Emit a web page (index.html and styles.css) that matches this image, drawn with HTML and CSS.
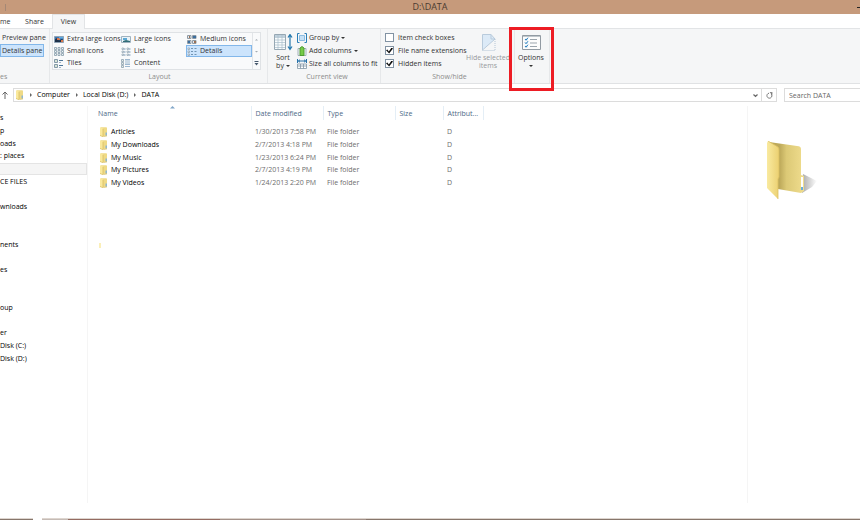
FILE: index.html
```html
<!DOCTYPE html>
<html lang="en">
<head>
<meta charset="utf-8">
<title>D:\DATA</title>
<link rel="stylesheet" href="styles.css">
</head>
<body>
<svg class="defs" aria-hidden="true">
  <defs>
    <linearGradient id="leaf" x1="0" y1="0" x2="1" y2="0"><stop offset="0" stop-color="#f9eaa0"/><stop offset="1" stop-color="#ebd071"/></linearGradient>
    <linearGradient id="back" x1="0" y1="0" x2="1" y2="0"><stop offset=".3" stop-color="#bda95a"/><stop offset=".5" stop-color="#dcc976"/><stop offset="1" stop-color="#f0dd8e"/></linearGradient>
    <linearGradient id="shade" x1="0" y1="0" x2="1" y2="0"><stop offset="0" stop-color="#aaa"/><stop offset="1" stop-color="#fff"/></linearGradient>
    <symbol id="folder" viewBox="0 0 9 10">
      <path d="M1 1l1-.7h5.500l.5.7v8H1z" fill="#efda86"/>
      <path d="M1 .5l3 1V10L1 8.500z" fill="#fae99c"/>
      <path d="M4 2v7.500" stroke="#cfb355" stroke-width=".6"/>
      <path d="M6.500 5.500h1.500v3h-1.500z" fill="#8fb6cf"/>
      <path d="M1 8.500l3 1.300 4-.9" stroke="#d3b856" stroke-width=".6" fill="none"/>
    </symbol>
    <symbol id="bullets" viewBox="0 0 10 9">
      <path d="M1 1h1.500v1.500H1zM1 4h1.500v1.500H1zM1 7h1.500v1.500H1z" fill="#fff" stroke="#8b9eae" stroke-width=".7"/>
      <path d="M4 1.500h2M7.500 1.500h2M4 4.500h2M7.500 4.500h2M4 7.500h2M7.500 7.500h2" stroke="#7294b3"/>
    </symbol>
  </defs>
</svg>

<header class="titlebar"><span class="grip"></span><h1>D:\DATA</h1><span class="minimize"></span></header>

<nav class="tabs" aria-label="Ribbon tabs">
  <button class="tab tab-home">me</button>
  <button class="tab tab-share">Share</button>
  <button class="tab tab-view">View</button>
</nav>

<section class="ribbon">
  <div class="group panes">
    <div class="stack">
      <button>Preview pane</button>
      <button class="selected">Details pane</button>
    </div>
    <h2>es</h2>
  </div>

  <div class="group layout">
    <div class="gallery">
      <div class="options-grid">
        <button><svg viewBox="0 0 10 9"><path d="M.5 1.500h9v6h-9z" fill="#3f75ae" stroke="#8fa3b5"/><path d="M1 7V4.500l2-1.500 2 2.500L8 4l1 1v2z" fill="#1d3048"/><path d="M3 3h3v2H3zM7 5h2v2H7z" fill="#d9784d"/><path d="M5 2h4v1.500H5z" fill="#5cabe2"/></svg>Extra large icons</button>
        <button><svg viewBox="0 0 10 9"><path d="M.5 1.500h9v6h-9z" fill="#e9f3f8" stroke="#9fb2bf"/><path d="M2 3h4v2H2z" fill="#5ca8d4"/><path d="M2 6l3-1 4 1v1H2z" fill="#306d78"/></svg>Large icons</button>
        <button><svg viewBox="0 0 10 9"><path d="M.5 .5h3.500v3H.5zM5.500 .5h3.500v3H5.500zM.5 5.500h3.500v3H.5zM5.500 5.500h3.500v3H5.500z" fill="#e6eaed" stroke="#8e9aa5"/><path d="M6 1h3v2H6zM1 6h2v2H1z" fill="#3c6e9d"/><path d="M2 1h1v2H2zM7 6h2v2H7z" fill="#9a7157"/></svg>Medium icons</button>
        <button><svg viewBox="0 0 10 9"><path d="M.5 .5h2v2h-2zM4 .5h2v2H4zM7.500 .5h2v2h-2zM.5 3.500h2v2h-2zM4 3.500h2v2H4zM7.500 3.500h2v2h-2zM.5 6.500h2v2h-2zM4 6.500h2v2H4zM7.500 6.500h2v2h-2z" fill="#eff5f6" stroke="#8499a8" stroke-width=".8"/></svg>Small icons</button>
        <button><svg viewBox="0 0 10 9"><path d="M1 1h1.500v1.500H1zM1 4h1.500v1.500H1zM1 7h1.500v1.500H1zM6 1h1.500v1.500H6zM6 4h1.500v1.500H6zM6 7h1.500v1.500H6z" fill="#fff" stroke="#8b9eae" stroke-width=".7"/><path d="M3 2h1.500M3 5h1.500M3 8h1.500M8 2h1.500M8 5h1.500M8 8h1.500" stroke="#7294b3"/></svg>List</button>
        <button class="selected"><svg><use href="#bullets"/></svg>Details</button>
        <button><svg viewBox="0 0 10 9"><path d="M.5 .5h3v3h-3zM.5 5.500h3v3h-3z" fill="#d8e5d6" stroke="#8499a8"/><path d="M5 1.500h4M5 6.500h4" stroke="#4e7698"/><path d="M5 3.500h2M5 8.500h2" stroke="#a1b4c4"/></svg>Tiles</button>
        <button><svg viewBox="0 0 10 9"><path d="M.5 .5h2v2h-2zM.5 3.500h2v2h-2zM.5 6.500h2v2h-2z" fill="#e6efe7" stroke="#8b9eae" stroke-width=".8"/><path d="M4 .5h5M4 2h5M4 4h5M4 5.500h5M4 7.500h5" stroke="#86a7c5" stroke-width=".8"/></svg>Content</button>
      </div>
      <div class="scroller">
        <button aria-label="Scroll up"><svg viewBox="0 0 5 5"><path d="M1 3.500L2.500 2 4 3.500z" fill="#a4abb2"/></svg></button>
        <button aria-label="Scroll down"><svg viewBox="0 0 5 5"><path d="M1 2h3L2.500 3.500z" fill="#a4abb2"/></svg></button>
        <button aria-label="More layouts"><svg viewBox="0 0 5 5"><path d="M.5 .5h4" stroke="#46586c"/><path d="M.5 2h4L2.500 4.500z" fill="#46586c"/></svg></button>
      </div>
    </div>
    <h2>Layout</h2>
  </div>

  <div class="group current">
    <div class="tools">
      <button class="large">
        <svg viewBox="0 0 19 17"><path d="M.5 .5h11v15H.5z" fill="#f9fcfd" stroke="#96a7b3"/><path d="M1 1h10v2H1z" fill="#bfd0dc"/><path d="M1 3.500h10M1 6h10M1 8.500h10M1 11h10M1 13.500h10M4 1v14M8 1v14" stroke="#a9bdca" stroke-width=".7"/><path d="M16 1v14M14 3.500l2-3 2 3M14 12.500l2 3 2-3" stroke="#2478ae" stroke-width="1.200" fill="none"/></svg>
        <span>Sort<br>by<i class="caret"></i></span>
      </button>
      <div class="stack">
        <button><svg viewBox="0 0 10 10"><path d="M2.500 .5h-2v9h2M7.500 .5h2v9h-2" fill="none" stroke="#2b7eb6"/><path d="M2.500 2.500h5v5h-5z" fill="#c6e1f6" stroke="#8cbce2"/></svg>Group by<i class="caret"></i></button>
        <button><svg viewBox="0 0 10 10"><path d="M1 2.500h8v7H1z" fill="#f6f8f9" stroke="#a2b0b9"/><path d="M3 2L5 .5 7 2v7.500H3z" fill="#75cb46" stroke="#4d9b33"/></svg>Add columns<i class="caret"></i></button>
        <button><svg viewBox="0 0 10 10"><path d="M.5 0v4M9.500 0v4M1 2h8M3 .7L1.500 2 3 3.300M7 .7L8.500 2 7 3.300" fill="none" stroke="#2873aa"/><path d="M.5 5h9v4.500h-9zM.5 7h9M3.500 5v4.500M6.500 5v4.500" fill="#fff" stroke="#8296a5" stroke-width=".8"/></svg>Size all columns to fit</button>
      </div>
    </div>
    <h2>Current view</h2>
  </div>

  <div class="group showhide">
    <div class="tools">
      <div class="stack">
        <label><input type="checkbox">Item check boxes</label>
        <label><input type="checkbox" checked>File name extensions</label>
        <label><input type="checkbox" checked>Hidden items</label>
      </div>
      <button class="large" disabled>
        <svg viewBox="0 0 15 17"><path d="M1 1h9l4 4L1 16z" fill="#dceaf7"/><path d="M1.500 16V.5H10L14 5" fill="none" stroke="#b9cbdc"/><path d="M10 .5V5h4M14 5L1.500 16" fill="none" stroke="#b9cbdc"/><path d="M14 5v11.500H1" fill="none" stroke="#b5c6d6" stroke-dasharray="1 1"/></svg>
        <span>Hide selected<br>items</span>
      </button>
    </div>
    <h2>Show/hide</h2>
  </div>

  <div class="group folder-options">
    <button class="large">
      <svg viewBox="0 0 19 15"><path d="M.5 .5h18v14H.5z" fill="#fcfcfc" stroke="#929ba3"/><path d="M1 1.500h17" stroke="#bfc6cb"/><path d="M3 3.500h3v2H3zM3 7h3v2H3zM3 10.500h3v2H3z" fill="#d9eaf6"/><path d="M3 4l1 1.200 2-2.500M3 7.500l1 1.200 2-2.500M3 11l1 1.200 2-2.500" fill="none" stroke="#287ebd"/><path d="M8 4.500h7M8 8h7M8 11.500h7" stroke="#9ca5ad"/></svg>
      <span>Options<br><i class="caret"></i></span>
    </button>
    <span class="highlight"></span>
  </div>
</section>

<section class="location">
  <button class="up" aria-label="Up"><svg viewBox="0 0 6 8"><path d="M3 8V1M.5 3.500L3 1l2.500 2.500" fill="none" stroke="#666"/></svg></button>
  <div class="address">
    <svg class="folder"><use href="#folder"/></svg>
    <ol>
      <li><a href="#">Computer</a></li>
      <li><a href="#">Local Disk (D:)</a></li>
      <li><a href="#">DATA</a></li>
    </ol>
    <button class="history" aria-label="Recent locations"><svg viewBox="0 0 5 5"><path d="M.5 1.500l2 2 2-2" fill="none" stroke="#666" stroke-width="1.200"/></svg></button>
    <button class="refresh" aria-label="Refresh"><svg viewBox="0 0 7 7"><path d="M5.300 2A2.500 2.500 0 1 1 3 1.200" fill="none" stroke="#777"/><path d="M3.500 0l3 .3-.3 2.700z" fill="#777"/></svg></button>
  </div>
  <input class="search" type="search" placeholder="Search DATA" aria-label="Search DATA">
</section>

<main>
  <nav class="tree" aria-label="Folders">
    <ul>
      <li>s</li><li>p</li><li>oads</li><li>: places</li><li class="current-place"></li><li>CE FILES</li><li></li><li>wnloads</li><li></li><li></li>
      <li>nents</li><li></li><li>es</li><li></li><li></li><li>oup</li><li></li><li>er</li><li>Disk (C:)</li><li>Disk (D:)</li>
    </ul>
  </nav>
  <section class="files">
    <table>
      <thead><tr><th class="name">Name<svg class="sorted" viewBox="0 0 5 3"><path d="M0 2.500L2.500 0 5 2.500z" fill="#80a6c8"/></svg></th><th class="date">Date modified</th><th class="type">Type</th><th class="size">Size</th><th class="attr">Attribut...</th></tr></thead>
      <tbody>
        <tr><td><svg class="folder"><use href="#folder"/></svg>Articles</td><td>1/30/2013 7:58 PM</td><td>File folder</td><td></td><td>D</td></tr>
        <tr><td><svg class="folder"><use href="#folder"/></svg>My Downloads</td><td>2/7/2013 4:18 PM</td><td>File folder</td><td></td><td>D</td></tr>
        <tr><td><svg class="folder"><use href="#folder"/></svg>My Music</td><td>1/23/2013 6:24 PM</td><td>File folder</td><td></td><td>D</td></tr>
        <tr><td><svg class="folder"><use href="#folder"/></svg>My Pictures</td><td>2/7/2013 4:19 PM</td><td>File folder</td><td></td><td>D</td></tr>
        <tr><td><svg class="folder"><use href="#folder"/></svg>My Videos</td><td>1/24/2013 2:20 PM</td><td>File folder</td><td></td><td>D</td></tr>
      </tbody>
    </table>
    <span class="speck"></span>
  </section>
  <aside class="details">
    <svg viewBox="0 0 54 60"><path d="M36 33l14 7-5 6-10 6z" fill="url(#shade)"/><path d="M2 1l28 4q4 0 4 3v26l3 1v15l-3 2-23-4z" fill="url(#back)"/><path d="M34 36h2v13h-2z" fill="#fff"/><path d="M34 46h2v3h-2z" fill="#68aee0"/><path d="M1 0l10 6q1 1 1 3v27l-1 2v20L0 47V2z" fill="url(#leaf)"/><path d="M1 0l10 6q1 1 1 3v27l-1 2v20" fill="none" stroke="#dcc062" stroke-width=".8"/></svg>
  </aside>
</main>
<footer class="taskbar"><span class="seg start"></span><span class="seg pale"></span><span class="seg red"></span><span class="seg mauve"></span><span class="seg rest"></span></footer>
</body>
</html>
```
FILE: styles.css
```css
* { box-sizing: border-box; }
body {
  margin: 0;
  min-height: 100vh;
  display: flex;
  flex-direction: column;
  overflow: hidden;
  background: #fff;
  color: #000;
  font: 7px/8px "Open Sans", "Noto Sans", sans-serif;
}
button, input { font: inherit; color: inherit; }
button { margin: 0; padding: 0; border: 0; background: none; white-space: nowrap; }
svg { display: block; flex: none; }
h1, h2, ul, ol { margin: 0; padding: 0; font-weight: 400; list-style: none; }
.defs { position: absolute; width: 0; height: 0; }

.titlebar { display: grid; grid-template-columns: 1fr auto 1fr; align-items: center; height: 14px; background: #c69a7b; color: #4b3a30; }
.titlebar h1 { font-size: 9px; line-height: 12px; }
.grip { width: 1px; height: 7px; margin-left: 5px; background: #a58875; }
.minimize { width: 3px; height: 1px; justify-self: end; background: #222; }

.tabs { display: flex; height: 15px; border-bottom: 1px solid #e2e4e6; color: #333; }
.tab { height: 15px; }
.tab-home { width: 17px; text-align: left; }
.tab-share { width: 35px; }
.tab-view { width: 33px; background: #f5f6f7; border: 1px solid #e2e4e6; border-bottom: 0; }

.ribbon { display: flex; height: 55px; background: #f5f6f7; border-bottom: 1px solid #e0e2e4; color: #333; }
.group { position: relative; display: flex; flex-direction: column; justify-content: space-between; padding: 2px 0 1px; border-right: 1px solid #e6e8ea; }
.group h2 { color: #8c8c8c; font-size: 7px; line-height: 10px; text-align: center; }
.group.panes { width: 50px; }
.group.panes h2 { text-align: left; }
.group.layout { width: 218px; padding-top: 3px; padding-left: 2px; }
.group.current { width: 113px; padding-left: 6px; }
.group.showhide { width: 134px; padding-left: 4px; }
.group.folder-options { width: 35px; }
.stack { display: flex; flex-direction: column; }
.stack button, .stack label { display: flex; align-items: center; gap: 2px; height: 13px; white-space: nowrap; }
.stack svg { width: 10px; height: 10px; }
.panes button { width: 44px; padding-left: 1px; border: 1px solid transparent; }
.panes .selected, .options-grid .selected { background: #cce4fc; border: 1px solid #82b7ea; }

.gallery { display: flex; width: 209px; height: 38px; border: 1px solid #dfe2e5; background: #f9fafb; }
.options-grid { display: grid; grid-template-columns: 67px 66px 66px; grid-template-rows: repeat(3, 12px); flex: 1; }
.options-grid button { display: flex; align-items: center; gap: 3px; padding-left: 1px; border: 1px solid transparent; border-left-width: 0; }
.options-grid svg { width: 10px; height: 9px; }
.options-grid .selected { padding-left: 0; }
.scroller { display: grid; width: 8px; border-left: 1px solid #e2e5e8; }
.scroller button { display: grid; place-items: center; }
.scroller svg { width: 5px; height: 5px; }

.tools { display: flex; }
.large { display: flex; flex-direction: column; align-items: center; gap: 3px; padding-top: 3px; }
.large span { line-height: 8px; }
.large svg { height: 17px; }
.current .large { width: 18px; margin-right: 5px; }
.current .large svg { width: 19px; }
.showhide .stack { width: 81px; }
.showhide .stack label { gap: 4px; }
.showhide .large { width: 44px; color: #96999c; }
.showhide .large svg { width: 15px; }
.folder-options .large { width: 32px; }
.folder-options .large svg { width: 19px; height: 17px; }
.caret { display: inline-block; margin-left: 2px; vertical-align: middle; border: 2px solid transparent; border-top-color: #333; border-bottom: 0; }
.stack .caret { margin-left: 0; }
.folder-options .caret { margin: 0; }
input[type="checkbox"] { appearance: none; display: grid; place-items: center; width: 9px; height: 9px; margin: 0; border: 1px solid #8192a3; background: #fff; }
input[type="checkbox"]:checked::after { content: ""; width: 7px; height: 6px; background: #111; clip-path: polygon(0 45%, 20% 35%, 40% 65%, 80% 0, 100% 15%, 45% 100%); }
.highlight { position: absolute; top: -2px; left: -6px; width: 45px; height: 64px; border: 3px solid #ed1c24; pointer-events: none; }

.location { display: flex; height: 18px; padding-top: 4px; }
.up { width: 13px; padding-left: 2px; }
.up svg { width: 6px; height: 8px; }
.address { display: flex; align-items: center; flex: 1; height: 14px; border: 1px solid #dcdcdc; padding-left: 1px; }
.folder { width: 9px; height: 10px; }
.address ol { display: flex; flex: 1; padding-left: 4px; }
.address li { display: flex; align-items: center; }
.address li::before { content: ""; margin: 0 5px 0 2px; border: 2px solid transparent; border-left-color: #666; border-right: 0; }
.address li + li::before { margin-left: 6px; }
.address a { color: #000; text-decoration: none; }
.history { display: grid; place-items: center; width: 11px; height: 12px; }
.history svg { width: 5px; height: 5px; }
.refresh { display: grid; place-items: center; width: 15px; height: 12px; border-left: 1px solid #dcdcdc; }
.refresh svg { width: 7px; height: 7px; }
.search { width: 76px; height: 14px; margin: 0 0 0 7px; padding: 0 4px; border: 1px solid #dcdcdc; border-right: 0; border-radius: 0; outline: 0; appearance: none; background: #fff; }
.search::placeholder { color: #666; opacity: 1; }

main { display: flex; flex: 1; padding: 4px 0 15px; }
.tree { width: 88px; padding-top: 6px; border-right: 1px solid #f5f5f5; }
.tree ul { display: grid; grid-template-rows: repeat(20, 1fr); height: 253px; }
.tree li { display: flex; align-items: center; white-space: nowrap; }
.current-place { width: 87px; background: #f5f5f5; border: 1px solid #e4e4e4; border-left: 0; }
.files { flex: 1; padding-left: 10px; }
.files table { table-layout: fixed; width: 385px; border-collapse: collapse; }
.files th { position: relative; height: 14px; padding: 2px 0 0 4px; border-right: 1px solid #e4eef6; color: #4b6886; font-weight: 400; text-align: left; }
.files .name { width: 153px; padding-left: 0; }
.files .date { width: 72px; }
.files .type { width: 72px; }
.files .size { width: 48px; }
.files .attr { width: 40px; }
.sorted { position: absolute; top: 0; left: 72px; width: 5px; height: 3px; }
.files thead::after { content: ""; display: block; height: 5px; }
.files td { height: 13px; padding: 0 0 0 4px; color: #6d6d6d; white-space: nowrap; }
.files tr:nth-child(4) td { height: 12px; }
.files td:first-child { display: flex; align-items: center; gap: 3px; padding-left: 1px; color: #000; }
.speck { display: block; width: 2px; height: 5px; margin: 54px 0 0 1px; background: #fbefb8; }
.details { width: 113px; padding: 35px 0 0 19px; border-left: 1px solid #f5f5f5; }
.details svg { width: 54px; height: 60px; }

.taskbar { display: flex; height: 2px; }
.seg { border-top: 1px solid #ddd5cf; background: #87766b; }
.start { width: 33px; margin-right: 9px; }
.pale { width: 26px; background: #c5bbb5; }
.red { width: 152px; background: #946b61; }
.mauve { width: 146px; background: #a39189; }
.rest { flex: 1; }
```
